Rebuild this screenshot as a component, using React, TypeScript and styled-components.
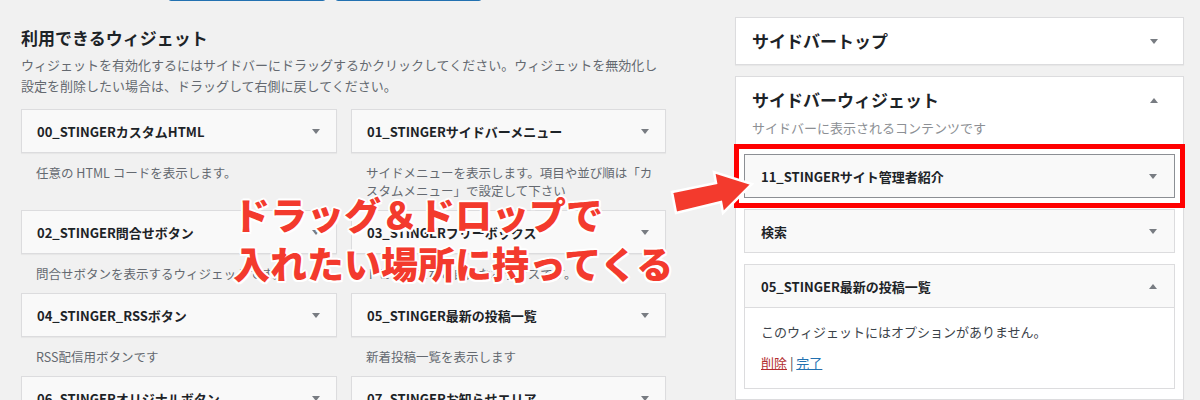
import styled, { createGlobalStyle } from 'styled-components';

const GlobalStyle = createGlobalStyle`
  html,
  body {
    margin: 0;
    background: #f1f1f1;
  }

  body {
    font-family: 'Noto Sans CJK JP', 'Noto Sans', sans-serif;
    color: #3c434a;
  }
`;

type Widget = {
  title: string;
  desc: string;
};

const AVAILABLE: Widget[] = [
  { title: '00_STINGERカスタムHTML', desc: '任意の HTML コードを表示します。' },
  {
    title: '01_STINGERサイドバーメニュー',
    desc: 'サイドメニューを表示します。項目や並び順は「カスタムメニュー」で設定して下さい',
  },
  { title: '02_STINGER問合せボタン', desc: '問合せボタンを表示するウィジェットです。' },
  { title: '03_STINGERフリーボックス', desc: 'トピックスなど自由なボックスです。' },
  { title: '04_STINGER_RSSボタン', desc: 'RSS配信用ボタンです' },
  { title: '05_STINGER最新の投稿一覧', desc: '新着投稿一覧を表示します' },
  { title: '06_STINGERオリジナルボタン', desc: 'オリジナルボタンを表示します' },
  { title: '07_STINGERお知らせエリア', desc: 'お知らせを表示します' },
];

function App() {
  return (
    <>
      <GlobalStyle />
      <Page>
        <Available>
          <ButtonRow>
            <TopButton $width={158} aria-label='ライブプレビューで管理' />
            <TopButton $width={147} aria-label='アクセシビリティモード' />
          </ButtonRow>
          <Heading>利用できるウィジェット</Heading>
          <Lead>
            ウィジェットを有効化するにはサイドバーにドラッグするかクリックしてください。ウィジェットを無効化し設定を削除したい場合は、ドラッグして右側に戻してください。
          </Lead>
          <WidgetGrid>
            {AVAILABLE.map((w) => (
              <div key={w.title}>
                <WidgetTop>
                  <WidgetTitle>{w.title}</WidgetTitle>
                  <Caret />
                </WidgetTop>
                <WidgetDesc>{w.desc}</WidgetDesc>
              </div>
            ))}
          </WidgetGrid>
        </Available>

        <Sidebars>
          <SidebarBox $top={17}>
            <SidebarHead $bottom={11}>
              <SidebarTitle>サイドバートップ</SidebarTitle>
              <Caret />
            </SidebarHead>
          </SidebarBox>

          <SidebarBox $top={11}>
            <SidebarHead $bottom={0}>
              <SidebarTitle>サイドバーウィジェット</SidebarTitle>
              <Caret $up />
            </SidebarHead>
            <SidebarNote>サイドバーに表示されるコンテンツです</SidebarNote>
            <WidgetList>
              <SidebarWidget $highlight>
                <WidgetHeader>
                  <WidgetTitle>11_STINGERサイト管理者紹介</WidgetTitle>
                  <Caret />
                </WidgetHeader>
              </SidebarWidget>
              <SidebarWidget>
                <WidgetHeader>
                  <WidgetTitle>検索</WidgetTitle>
                  <Caret />
                </WidgetHeader>
              </SidebarWidget>
              <SidebarWidget>
                <WidgetHeader>
                  <WidgetTitle>05_STINGER最新の投稿一覧</WidgetTitle>
                  <Caret $up />
                </WidgetHeader>
                <WidgetBody>
                  <p>このウィジェットにはオプションがありません。</p>
                  <Actions>
                    <ActionLink $danger>削除</ActionLink> | <ActionLink>完了</ActionLink>
                  </Actions>
                </WidgetBody>
              </SidebarWidget>
            </WidgetList>
          </SidebarBox>
        </Sidebars>

        <DragArrow width='100' height='60' viewBox='0 0 100 60'>
          <polygon
            points='12,27 16,48 61,37 63,48 92,19 54,7 56,18'
            fill='#f33a2d'
            stroke='#fff'
            strokeWidth='2.5'
            strokeLinejoin='miter'
          />
        </DragArrow>
        <Callout>
          ドラッグ＆ドロップで
          <br />
          入れたい場所に持ってくる
        </Callout>
      </Page>
    </>
  );
}

export default App;

const Page = styled.div`
  position: relative;
  display: flex;
  height: 400px;
  overflow: hidden;
`;

const Available = styled.section`
  width: 645px;
  margin-left: 21px;
`;

const ButtonRow = styled.div`
  display: flex;
  gap: 9px;
  height: 2px;
  padding-left: 147px;
`;

const TopButton = styled.a<{ $width: number }>`
  box-sizing: border-box;
  display: block;
  width: ${({ $width }) => $width}px;
  height: 30px;
  margin-top: -29px;

  border: 1px solid #2271b1;
  border-radius: 3px;
  background: #f6f7f7;
`;

const Heading = styled.h2`
  margin: 24px 0 0;
  font-size: 17px;
  font-weight: 700;
  line-height: 24px;
  color: #1d2327;
`;

const Lead = styled.p`
  margin: 4px 0 0;
  font-size: 13px;
  line-height: 21px;
  color: #646970;
`;

const WidgetGrid = styled.div`
  display: grid;
  grid-template-columns: 316px 315px;
  column-gap: 14px;
  margin-top: 13px;
`;

const WidgetTop = styled.div`
  box-sizing: border-box;
  display: flex;
  align-items: center;
  justify-content: space-between;
  height: 44px;
  padding: 0 16px 0 15px;

  border: 1px solid #dcdcde;
  background: #f9f9f9;
  box-shadow: 0 1px 1px rgb(0 0 0 / 4%);
`;

const WidgetTitle = styled.span`
  font-size: 13px;
  font-weight: 700;
  color: #1d2327;
`;

const Caret = styled.span<{ $up?: boolean }>`
  width: 0;
  height: 0;
  border-left: 4px solid transparent;
  border-right: 4px solid transparent;
  ${({ $up }) => ($up ? 'border-bottom' : 'border-top')}: 5px solid #787c82;
`;

const WidgetDesc = styled.p`
  margin: 0 0 10px;
  padding: 11px 10px 0 15px;
  font-size: 12.5px;
  line-height: 18px;
  color: #646970;
`;

const Sidebars = styled.aside`
  width: 449px;
  margin-left: 69px;
`;

const SidebarBox = styled.div<{ $top: number }>`
  margin-top: ${({ $top }) => $top}px;
  border: 1px solid #dcdcde;
  background: #fff;
  box-shadow: 0 1px 1px rgb(0 0 0 / 4%);
`;

const SidebarHead = styled.div<{ $bottom: number }>`
  display: flex;
  align-items: center;
  justify-content: space-between;
  padding: 11px 25px ${({ $bottom }) => $bottom}px 16px;
`;

const SidebarTitle = styled.h3`
  margin: 0;
  font-size: 17px;
  font-weight: 700;
  line-height: 24px;
  color: #1d2327;
`;

const SidebarNote = styled.p`
  margin: 7px 0 0;
  padding: 0 16px;
  font-size: 13px;
  line-height: 18px;
  color: #8c8f94;
`;

const WidgetList = styled.div`
  display: flex;
  flex-direction: column;
  gap: 11px;
  padding: 17px 8px 10px;
`;

const SidebarWidget = styled.div<{ $highlight?: boolean }>`
  border: 1px solid ${({ $highlight }) => ($highlight ? '#8c8f94' : '#dcdcde')};
  background: #fff;
  ${({ $highlight }) => $highlight && 'outline: 5px solid #ff0000; outline-offset: 5px;'}
`;

const WidgetHeader = styled.div`
  display: flex;
  align-items: center;
  justify-content: space-between;
  height: 42px;
  padding: 0 17px 0 16px;
  background: #f9f9f9;
`;

const WidgetBody = styled.div`
  padding: 15px 16px 16px;
  border-top: 1px solid #dcdcde;
  font-size: 13px;
  line-height: 18px;
  color: #3c434a;

  p {
    margin: 0;
  }
`;

const Actions = styled.div`
  margin-top: 13px;
`;

const ActionLink = styled.a<{ $danger?: boolean }>`
  color: ${({ $danger }) => ($danger ? '#b32d2e' : '#2271b1')};
  text-decoration: underline;
`;

const DragArrow = styled.svg`
  position: absolute;
  left: 660px;
  top: 165px;
`;

const Callout = styled.div`
  position: absolute;
  left: 233px;
  top: 190px;

  font-size: 37px;
  font-weight: 900;
  line-height: 49px;
  white-space: nowrap;
  color: #f33a2d;
  text-shadow:
    2px 0 0 #fff,
    -2px 0 0 #fff,
    0 2px 0 #fff,
    0 -2px 0 #fff,
    1.5px 1.5px 0 #fff,
    -1.5px 1.5px 0 #fff,
    1.5px -1.5px 0 #fff,
    -1.5px -1.5px 0 #fff;
`;
